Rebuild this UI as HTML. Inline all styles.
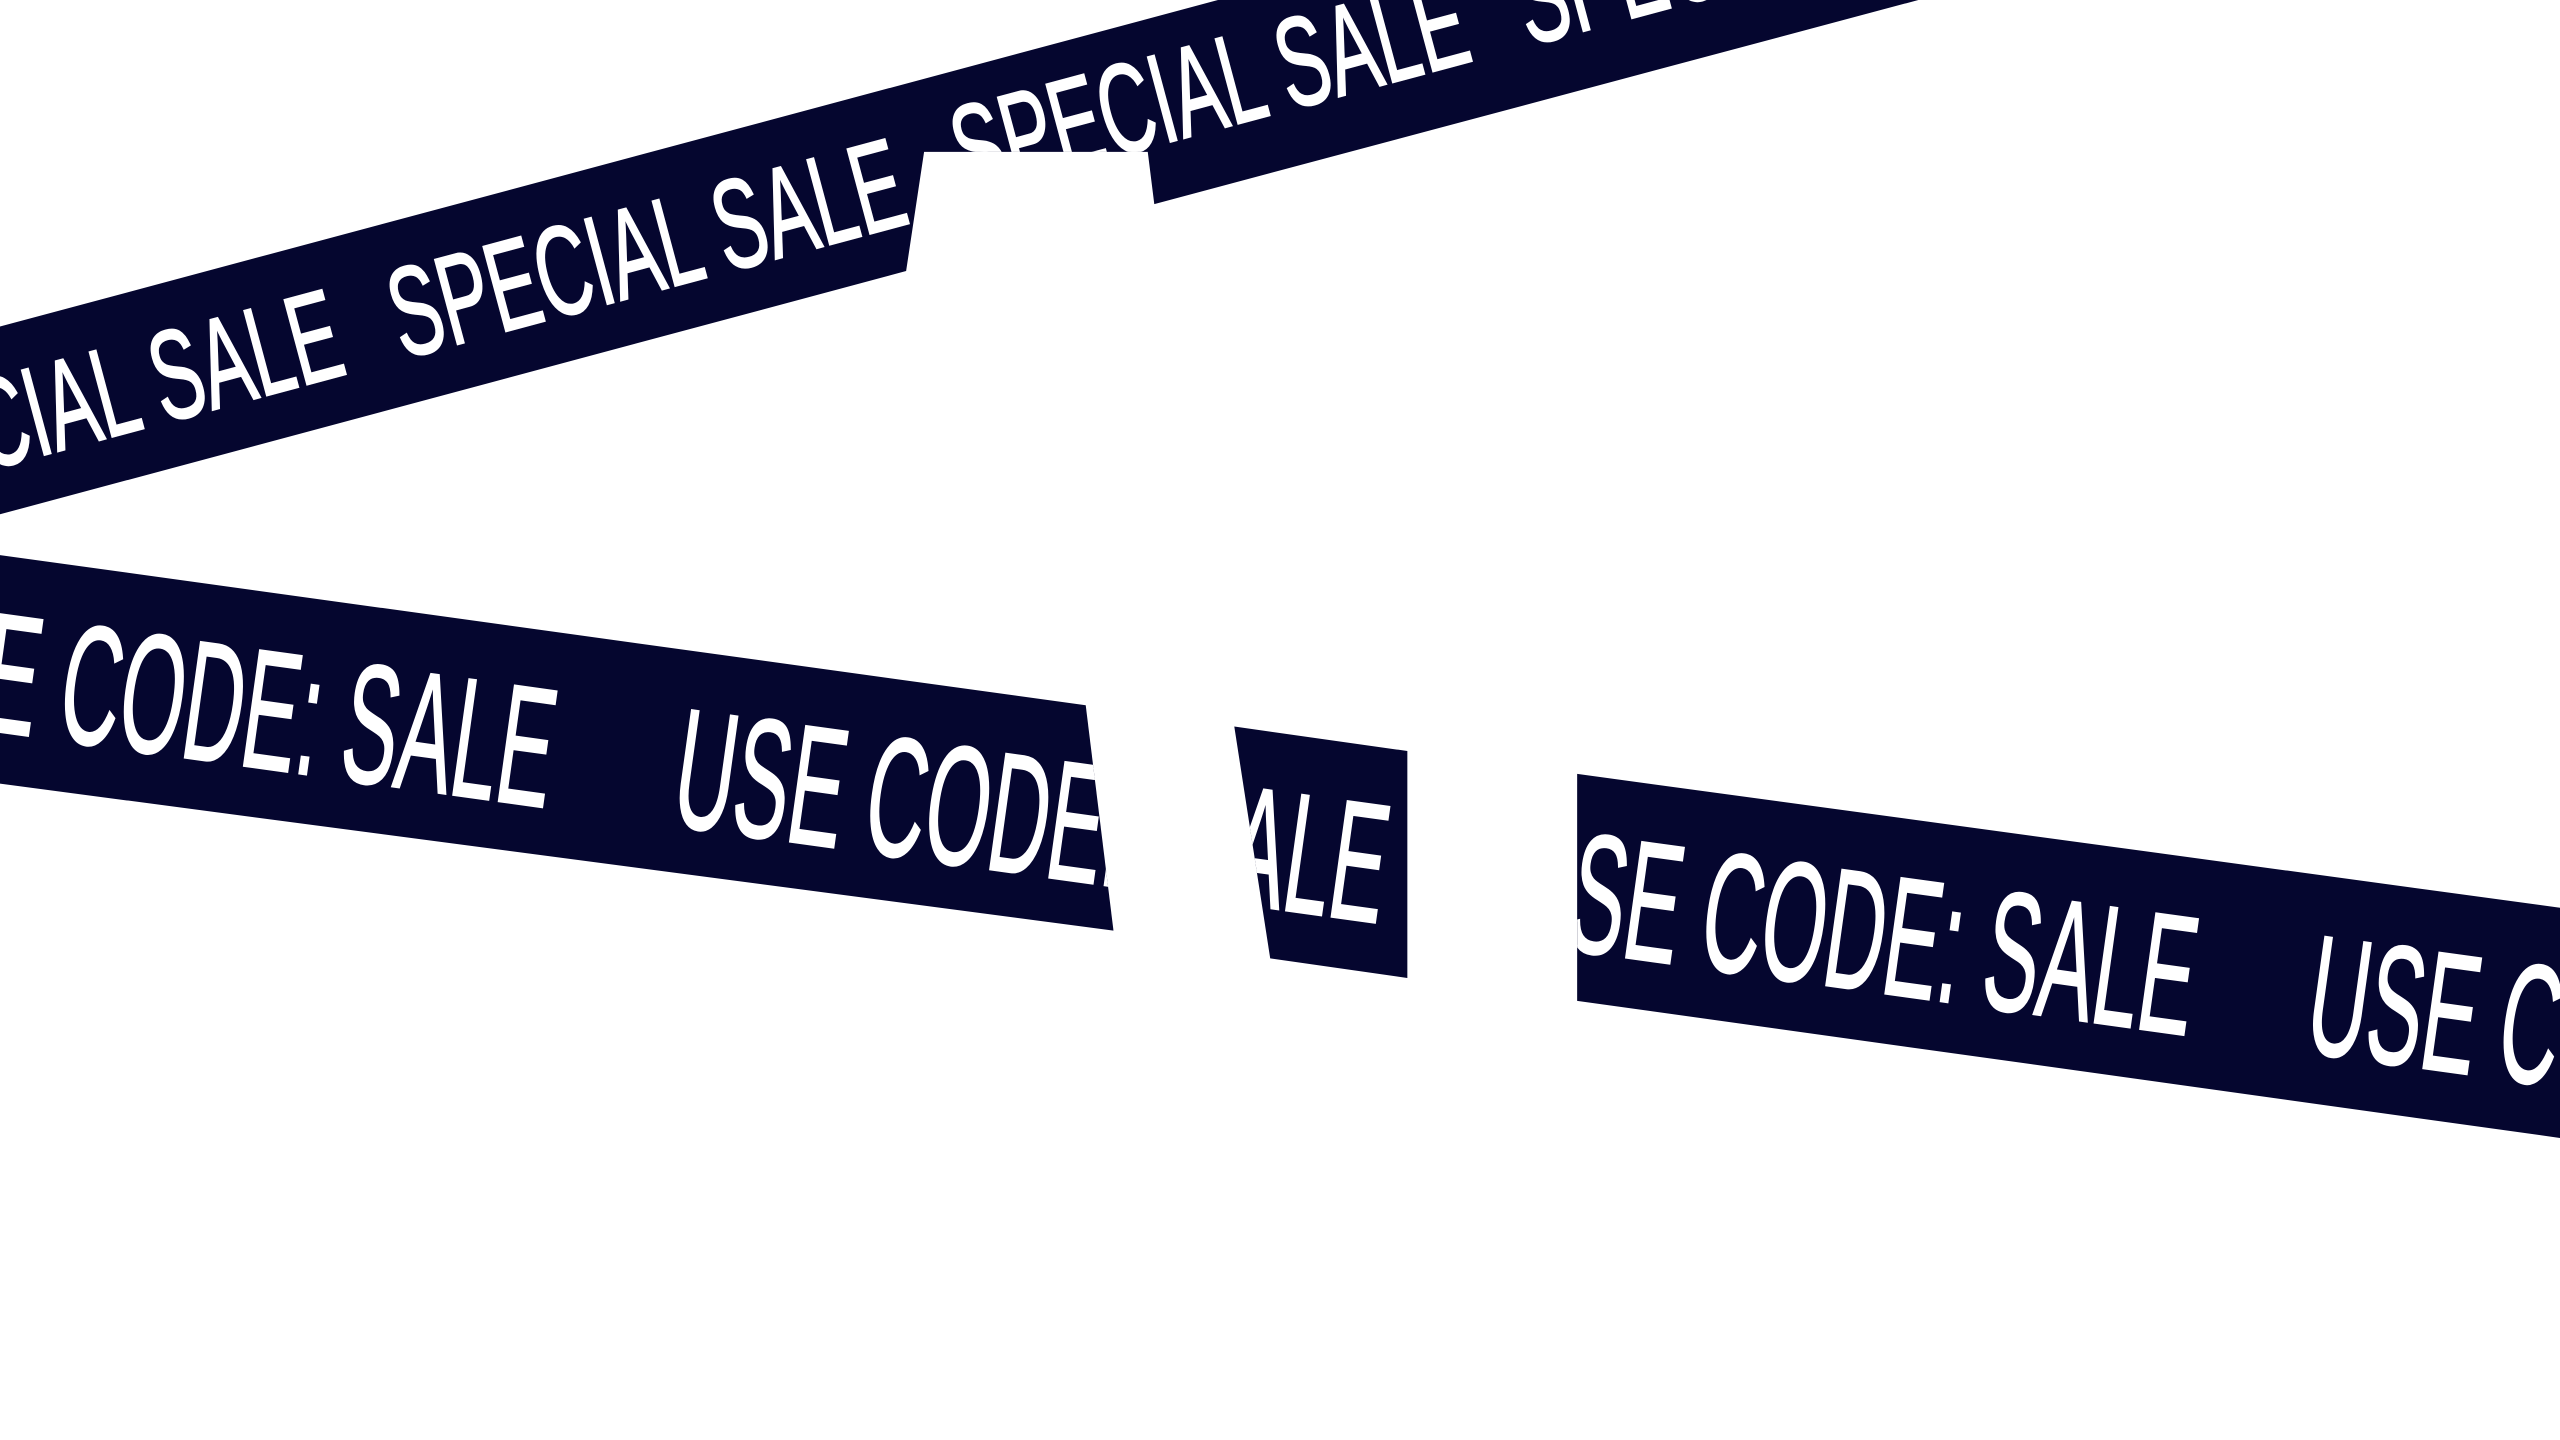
<!DOCTYPE html>
<html><head><meta charset="utf-8"><style>
html,body{margin:0;padding:0;background:#fff;width:2560px;height:1440px;overflow:hidden}
svg{display:block}
text{font-family:"Liberation Sans Narrow","Liberation Sans",sans-serif;fill:#fff;stroke:#fff;stroke-width:1.2}
</style></head><body>
<svg width="2560" height="1440" viewBox="0 0 1568 882" xmlns="http://www.w3.org/2000/svg">
<defs>
<clipPath id="c1"><polygon points="0,200 566,48 566,93 555,166 0,315"/></clipPath>
<clipPath id="c2"><polygon points="566,48 746,0 1175,0 707,125 703,93 566,93"/></clipPath>
<clipPath id="c3"><polygon points="0,340 665,432 682,570 0,480"/></clipPath>
<clipPath id="c4"><polygon points="756,445 862,460 862,599 778,587"/></clipPath>
<clipPath id="c5"><polygon points="966,474 1568,556 1568,697 966,613"/></clipPath>
</defs>
<g fill="#05062f">
<polygon points="0,200 746,0 1175,0 707,125 703,93 566,93 555,166 0,315"/>
<polygon points="0,340 665,432 682,570 0,480"/>
<polygon points="756,445 862,460 862,599 778,587"/>
<polygon points="966,474 1568,556 1568,697 966,613"/>
</g>
<g clip-path="url(#c1)"><g transform="translate(0,257) rotate(-15)" font-size="78">
<text x="-109" y="28" textLength="323" lengthAdjust="spacingAndGlyphs">SPECIAL SALE</text>
<text x="248" y="28" textLength="323" lengthAdjust="spacingAndGlyphs">SPECIAL SALE</text>
<text x="605" y="28" textLength="323" lengthAdjust="spacingAndGlyphs">SPECIAL SALE</text>
</g></g>
<g clip-path="url(#c2)"><g transform="translate(0,250) rotate(-15)" font-size="78">
<text x="605" y="28" textLength="323" lengthAdjust="spacingAndGlyphs">SPECIAL SALE</text>
<text x="962" y="28" textLength="323" lengthAdjust="spacingAndGlyphs">SPECIAL SALE</text>
</g></g>
<g clip-path="url(#c3)"><g transform="translate(0,410) rotate(7.9)" font-size="104">
<text x="-79" y="38" textLength="422" lengthAdjust="spacingAndGlyphs">USE CODE: SALE</text>
<text x="419" y="38" textLength="422" lengthAdjust="spacingAndGlyphs">USE CODE: SALE</text>
</g></g>
<g clip-path="url(#c4)"><g transform="translate(0,410) rotate(7.9)" font-size="104">
<text x="436" y="38" textLength="422" lengthAdjust="spacingAndGlyphs">USE CODE: SALE</text>
</g></g>
<g clip-path="url(#c5)"><g transform="translate(0,410) rotate(7.9)" font-size="104">
<text x="936" y="38" textLength="422" lengthAdjust="spacingAndGlyphs">USE CODE: SALE</text>
<text x="1429" y="38" textLength="422" lengthAdjust="spacingAndGlyphs">USE CODE: SALE</text>
</g></g>
</svg>
</body></html>
